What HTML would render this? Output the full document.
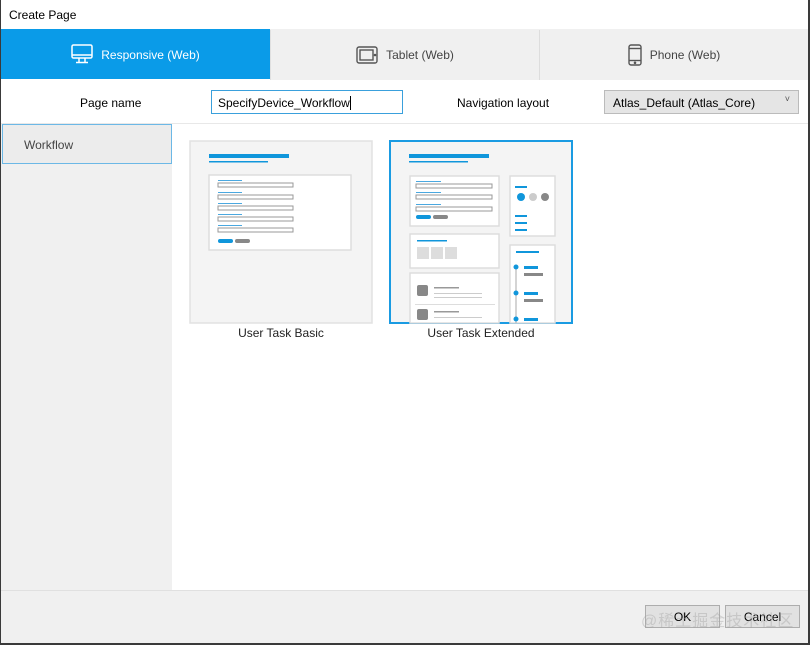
<!DOCTYPE html>
<html><head><meta charset="utf-8"><style>
*{margin:0;padding:0;box-sizing:border-box}
body{width:810px;height:645px;background:#3a3a3a;font-family:"Segoe UI","Liberation Sans","Noto Sans CJK SC",sans-serif;font-size:12px;color:#000;position:relative;overflow:hidden}
.win{position:absolute;left:1px;top:0;width:807px;height:643px;background:#fff}
.a{position:absolute}
.tab{position:absolute;top:30px;height:50px;display:flex;align-items:center;justify-content:center;gap:8px;font-size:12px;color:#444;background:#f0f0f0}
</style></head><body>
<div class="win">
<div class="a" style="left:8px;top:8px;font-size:12px">Create Page</div>
<div class="a" style="left:0;top:29px;width:807px;height:50px;background:#f0f0f0"></div>
<div class="tab" style="left:0;top:29px;width:269px;background:#0a9be8;color:#fff">
<svg width="22" height="20" viewBox="0 0 22 20" fill="none" stroke="#fff" stroke-width="1.5"><rect x="1" y="1" width="20" height="13" rx="1.5"/><line x1="1" y1="11" x2="21" y2="11"/><line x1="8" y1="14" x2="8" y2="18"/><line x1="14" y1="14" x2="14" y2="18"/><line x1="5" y1="18.5" x2="17" y2="18.5"/></svg><span style="margin-top:2px">Responsive (Web)</span></div>
<div class="tab" style="left:269px;width:269px;border-left:1px solid #e0e0e0">
<svg width="22" height="18" viewBox="0 0 22 18" fill="none" stroke="#555" stroke-width="1.4"><rect x="1" y="1" width="20" height="16" rx="2"/><rect x="4" y="4" width="13" height="10"/><circle cx="19" cy="9" r=".6" fill="#555"/></svg>Tablet (Web)</div>
<div class="tab" style="left:538px;width:269px;border-left:1px solid #ddd">
<svg width="14" height="22" viewBox="0 0 14 22" fill="none" stroke="#555" stroke-width="1.4"><rect x="1" y="1" width="12" height="20" rx="2"/><line x1="1" y1="4.5" x2="13" y2="4.5"/><line x1="1" y1="16.5" x2="13" y2="16.5"/><circle cx="7" cy="18.8" r=".6" fill="#555"/></svg>Phone (Web)</div>
<div class="a" style="left:79px;top:96px">Page name</div>
<div class="a" style="left:210px;top:90px;width:192px;height:24px;border:1px solid #3aa0dc;padding:5px 6px">SpecifyDevice_Workflow<span style="border-left:1px solid #000;margin-left:0"></span></div>
<div class="a" style="left:456px;top:96px">Navigation layout</div>
<div class="a" style="left:603px;top:90px;width:195px;height:24px;border:1px solid #bbb;background:#e5e5e5;padding:5px 8px">Atlas_Default (Atlas_Core)<span style="position:absolute;right:8px;top:3px;font-size:9px;color:#555">˅</span></div>
<div class="a" style="left:0;top:123px;width:807px;height:1px;background:#e8e8e8"></div>
<div class="a" style="left:0;top:124px;width:171px;height:466px;background:#f0f0f0"></div>
<div class="a" style="left:1px;top:124px;width:170px;height:40px;border:1px solid #6cb8e6;background:#ececec;padding:13px 21px;color:#444;font-size:12px">Workflow</div>
<div class="a" style="left:0;top:590px;width:807px;height:53px;background:#f0f0f0;border-top:1px solid #e0e0e0"></div>
<div class="a" style="left:644px;top:605px;width:75px;height:23px;background:#e1e1e1;border:1px solid #adadad;text-align:center;line-height:23px">OK</div>
<div class="a" style="left:724px;top:605px;width:75px;height:23px;background:#e1e1e1;border:1px solid #adadad;text-align:center;line-height:23px">Cancel</div>
<div class="a" style="left:640px;top:607px;font-size:16px;color:rgba(160,160,160,.4);letter-spacing:1px">@稀土掘金技术社区</div>

<svg class="a" style="left:188px;top:140px" width="385" height="185" viewBox="0 0 385 185">
<rect x="1" y="1" width="182" height="182" fill="#f4f4f4" stroke="#e2e2e2" stroke-width="1.5"/>
<rect x="20" y="14" width="80" height="4" fill="#1096db"/><rect x="20" y="21" width="59" height="1.5" fill="#1096db"/>
<rect x="20" y="35" width="142" height="75" fill="#fff" stroke="#ddd" stroke-width="1.5"/>
<g fill="none" stroke="#999" stroke-width="1">
<rect x="29" y="43" width="75" height="4"/><rect x="29" y="55" width="75" height="4"/><rect x="29" y="66" width="75" height="4"/><rect x="29" y="77" width="75" height="4"/><rect x="29" y="88" width="75" height="4"/></g>
<g fill="#4aa8e0"><rect x="29" y="40" width="24" height="1"/><rect x="29" y="52" width="24" height="1"/><rect x="29" y="63" width="24" height="1"/><rect x="29" y="74" width="24" height="1"/><rect x="29" y="85" width="24" height="1"/></g>
<rect x="29" y="99" width="15" height="4" rx="2" fill="#1096db"/><rect x="46" y="99" width="15" height="4" rx="2" fill="#888"/>

<rect x="201" y="1" width="182" height="182" fill="#f4f4f4" stroke="#1a9be2" stroke-width="2"/>
<rect x="220" y="14" width="80" height="4" fill="#1096db"/><rect x="220" y="21" width="59" height="1.5" fill="#1096db"/>
<rect x="221" y="36" width="89" height="50" fill="#fff" stroke="#ddd" stroke-width="1.5"/>
<g fill="none" stroke="#999"><rect x="227" y="44" width="76" height="4"/><rect x="227" y="55" width="76" height="4"/><rect x="227" y="67" width="76" height="4"/></g>
<g fill="#4aa8e0"><rect x="227" y="41" width="25" height="1"/><rect x="227" y="52" width="25" height="1"/><rect x="227" y="64" width="25" height="1"/></g>
<rect x="227" y="75" width="15" height="4" rx="2" fill="#1096db"/><rect x="244" y="75" width="15" height="4" rx="2" fill="#888"/>
<rect x="321" y="36" width="45" height="60" fill="#fff" stroke="#ddd" stroke-width="1.5"/>
<rect x="326" y="46" width="12" height="2" fill="#1096db"/>
<circle cx="332" cy="57" r="4" fill="#1096db"/><circle cx="344" cy="57" r="4" fill="#ccc"/><circle cx="356" cy="57" r="4" fill="#888"/>
<rect x="326" y="75" width="12" height="2" fill="#1096db"/><rect x="326" y="82" width="12" height="2" fill="#1096db"/><rect x="326" y="89" width="12" height="2" fill="#1096db"/>
<rect x="221" y="94" width="89" height="34" fill="#fff" stroke="#ddd" stroke-width="1.5"/>
<rect x="228" y="100" width="30" height="1.5" fill="#1096db"/>
<rect x="228" y="107" width="12" height="12" fill="#ddd"/><rect x="242" y="107" width="12" height="12" fill="#ddd"/><rect x="256" y="107" width="12" height="12" fill="#ddd"/>
<rect x="221" y="133" width="89" height="50" fill="#fff" stroke="#ddd" stroke-width="1.5"/>
<rect x="228" y="145" width="11" height="11" rx="2" fill="#888"/><rect x="245" y="147" width="25" height="1.5" fill="#999"/><rect x="245" y="153" width="48" height="1" fill="#ccc"/><rect x="245" y="157" width="48" height="1" fill="#ccc"/>
<rect x="226" y="164" width="80" height="1" fill="#ddd"/>
<rect x="228" y="169" width="11" height="11" rx="2" fill="#888"/><rect x="245" y="171" width="25" height="1.5" fill="#999"/><rect x="245" y="177" width="48" height="1" fill="#ccc"/>
<rect x="321" y="105" width="45" height="78" fill="#fff" stroke="#ddd" stroke-width="1.5"/>
<rect x="327" y="111" width="23" height="2" fill="#1096db"/>
<line x1="327" y1="127" x2="327" y2="183" stroke="#aaa"/>
<circle cx="327" cy="127" r="2.5" fill="#1096db"/><circle cx="327" cy="153" r="2.5" fill="#1096db"/><circle cx="327" cy="179" r="2.5" fill="#1096db"/>
<rect x="335" y="126" width="14" height="3" fill="#1096db"/><rect x="335" y="133" width="19" height="3" fill="#888"/>
<rect x="335" y="152" width="14" height="3" fill="#1096db"/><rect x="335" y="159" width="19" height="3" fill="#888"/>
<rect x="335" y="178" width="14" height="3" fill="#1096db"/>
</svg>
<div class="a" style="left:188px;top:326px;width:184px;text-align:center;font-size:12px;color:#222">User Task Basic</div>
<div class="a" style="left:388px;top:326px;width:184px;text-align:center;font-size:12px;color:#222">User Task Extended</div>
</div>
</body></html>
